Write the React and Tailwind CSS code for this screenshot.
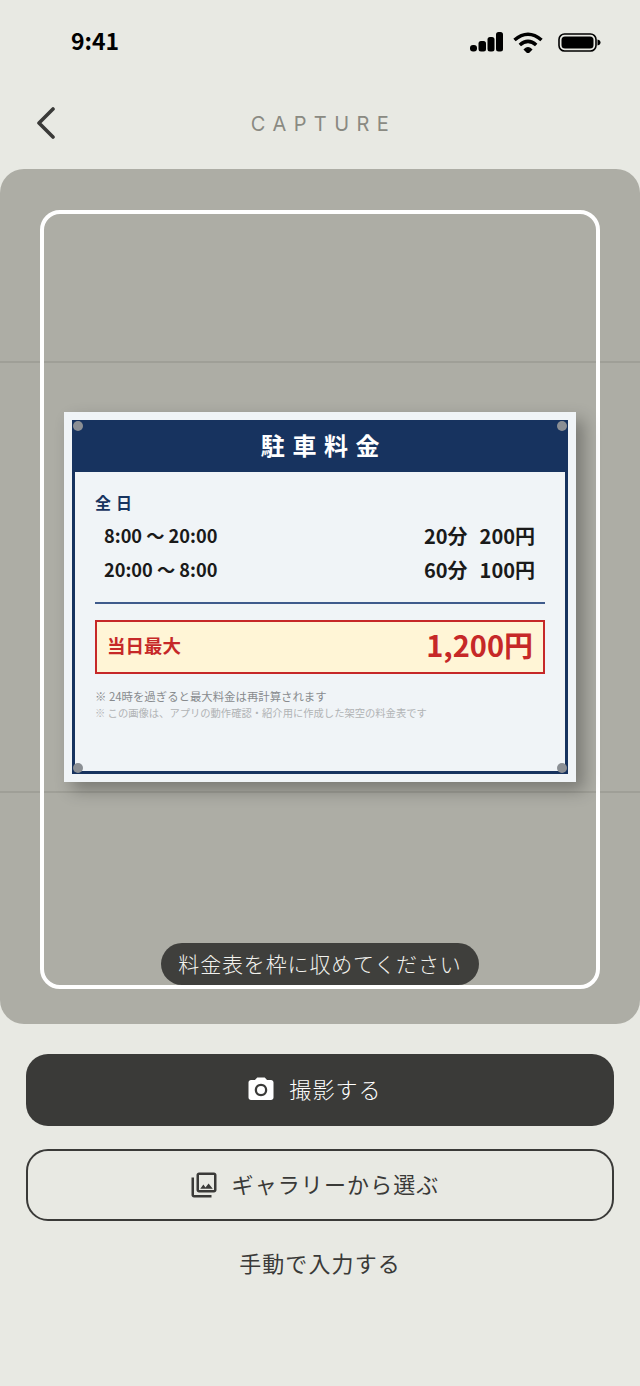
import React from "react";
import { MdPhotoCamera, MdOutlinePhotoLibrary } from "react-icons/md";

const StatusIcons = () => (
  <div className="flex items-center">
    {/* signal */}
    <svg width="33" height="20" viewBox="0 0 33 20" fill="#000">
      <rect x="0" y="13" width="7" height="6.5" rx="3" />
      <rect x="8.5" y="9" width="7.5" height="10.5" rx="2.5" />
      <rect x="17.5" y="5" width="7" height="14.5" rx="2.5" />
      <rect x="26" y="0" width="7" height="19.5" rx="2.5" />
    </svg>
    {/* wifi */}
    <svg className="ml-[10px]" width="30" height="21" viewBox="0 0 30 21" fill="none" stroke="#000" strokeWidth="3.6">
      <path d="M1.5 8 Q15 -3.5 28.5 8" />
      <path d="M6.8 13 Q15 5.8 23.2 13" />
      <path d="M11.5 17.5 L15 21 L18.5 17.5 Q15 14 11.5 17.5 Z" fill="#000" stroke="#000" strokeWidth="1.5" />
    </svg>
    {/* battery */}
    <svg className="ml-[15px] mt-[1px]" width="43" height="19" viewBox="0 0 43 19" fill="none">
      <rect x="1" y="1" width="37" height="17" rx="5.5" stroke="#000" strokeWidth="1.6" />
      <rect x="3.5" y="3.5" width="32" height="12" rx="3.5" fill="#000" />
      <path d="M39.5 6.5 C41.5 6.8 42.5 8 42.5 9.5 C42.5 11 41.5 12.2 39.5 12.5 Z" fill="#000" />
    </svg>
  </div>
);

const Screw = ({ className }) => (
  <span className={`absolute w-[10px] h-[10px] rounded-full bg-[#8b8f94] ${className}`}></span>
);

const PriceRow = ({ time, minutes, price }) => (
  <div className="flex justify-between items-center">
    <span className="text-[18.2px] font-semibold">{time}</span>
    <span className="flex gap-[12px] text-[20px] font-semibold translate-y-[1px]">
      <span>{minutes}</span>
      <span>{price}</span>
    </span>
  </div>
);

const PriceCard = () => (
  <div className="relative w-[512px] h-[370px] p-2 bg-[#f0f4f7] shadow-[8px_8px_16px_rgba(0,0,0,0.3)]">
    <div className="h-full border-[3px] border-[#17335f]">
      <div className="h-[49px] bg-[#17335f] flex items-center justify-center pb-[5px] pl-2">
        <h1 className="text-[24px] leading-none font-semibold tracking-[7.6px] text-white">駐車料金</h1>
      </div>

      <div className="px-5 pt-5">
        <p className="text-[16px] leading-[20px] font-semibold tracking-[5px] text-[#17335f]">全日</p>

        <div className="mt-[6px] pl-[9px] pr-[10px] leading-[34px] text-[#1a1a1a]">
          <PriceRow time="8:00 〜 20:00" minutes="20分" price="200円" />
          <PriceRow time="20:00 〜 8:00" minutes="60分" price="100円" />
        </div>

        <hr className="mt-4 border-t-2 border-[#3f5b8c]" />

        <div className="mt-4 h-[54px] px-[10px] border-2 border-[#c62828] bg-[#fff5d6] flex items-center justify-between text-[#c62828]">
          <span className="text-[18.5px] font-semibold pb-[2px]">当日最大</span>
          <span className="text-[29px] leading-none font-semibold pb-[5px]">1,200円</span>
        </div>

        <p className="mt-[13px] text-[11.4px] leading-[18px] text-[#888b8e]">※ 24時を過ぎると最大料金は再計算されます</p>
        <p className="text-[10.3px] leading-[16px] text-[#b0b3b5]">※ この画像は、アプリの動作確認・紹介用に作成した架空の料金表です</p>
      </div>
    </div>
    <Screw className="left-[9px] top-[9px]" />
    <Screw className="right-[9px] top-[9px]" />
    <Screw className="left-[9px] bottom-[9px]" />
    <Screw className="right-[9px] bottom-[9px]" />
  </div>
);

export default function App() {
  return (
    <div className="w-[640px] min-h-[1386px] bg-[#e8e9e3] font-['Noto_Sans_CJK_JP',sans-serif]">
      {/* Status Bar */}
      <div className="h-[84px] pl-[71px] pr-[39px] flex items-center justify-between">
        <span className="text-[23px] leading-none font-bold text-black pb-1">9:41</span>
        <StatusIcons />
      </div>

      {/* Header */}
      <div className="relative h-[78px] flex items-center justify-center">
        <button className="absolute left-[36px] top-[23px]">
          <svg width="20" height="32" viewBox="0 0 20 32" fill="none" stroke="#3a3a38" strokeWidth="3.6" strokeLinecap="round" strokeLinejoin="round">
            <path d="M17 2 L3 16 L17 30" />
          </svg>
        </button>
        <p className="ml-[7px] pt-[2px] text-[20px] leading-none font-normal tracking-[7.4px] text-[#8a8a82] font-['Inter',sans-serif]">CAPTURE</p>
      </div>

      {/* Camera Area */}
      <div className="relative mt-[7px] h-[855px] rounded-[24px] bg-[#adada5] px-10 pt-[41px]">
        <div className="absolute left-0 right-0 top-[192px] h-[2px] bg-[#9f9f97]"></div>
        <div className="absolute left-0 right-0 top-[622px] h-[2px] bg-[#9f9f97]"></div>

        <div className="relative h-[779px] rounded-[20px] border-4 border-white flex justify-center pt-[198px]">
          <PriceCard />
          <div className="absolute left-1/2 -translate-x-1/2 bottom-0 h-[42px] w-[318px] rounded-full bg-[#3f3f3c] flex items-center justify-center">
            <span className="text-[21px] font-light tracking-[0.04em] text-[#f2f2ee] whitespace-nowrap">料金表を枠に収めてください</span>
          </div>
        </div>
      </div>

      {/* Actions */}
      <div className="px-[26px] pt-[30px] flex flex-col">
        <button className="h-[72px] pr-3 rounded-[22px] bg-[#3a3a38] flex items-center justify-center gap-[13px] text-white">
          <MdPhotoCamera size={30} />
          <span className="text-[22px] font-light tracking-[0.05em] pb-1">撮影する</span>
        </button>
        <button className="mt-[23px] h-[72px] pr-3 rounded-[22px] border-2 border-[#3a3a38] flex items-center justify-center gap-[13px] text-[#3a3a38]">
          <MdOutlinePhotoLibrary size={30} />
          <span className="text-[22px] font-normal tracking-[0.05em] pb-1">ギャラリーから選ぶ</span>
        </button>
        <button className="mt-[21px] h-[40px] text-[22px] font-normal tracking-[0.05em] text-[#3a3a38]">手動で入力する</button>
      </div>
    </div>
  );
}
